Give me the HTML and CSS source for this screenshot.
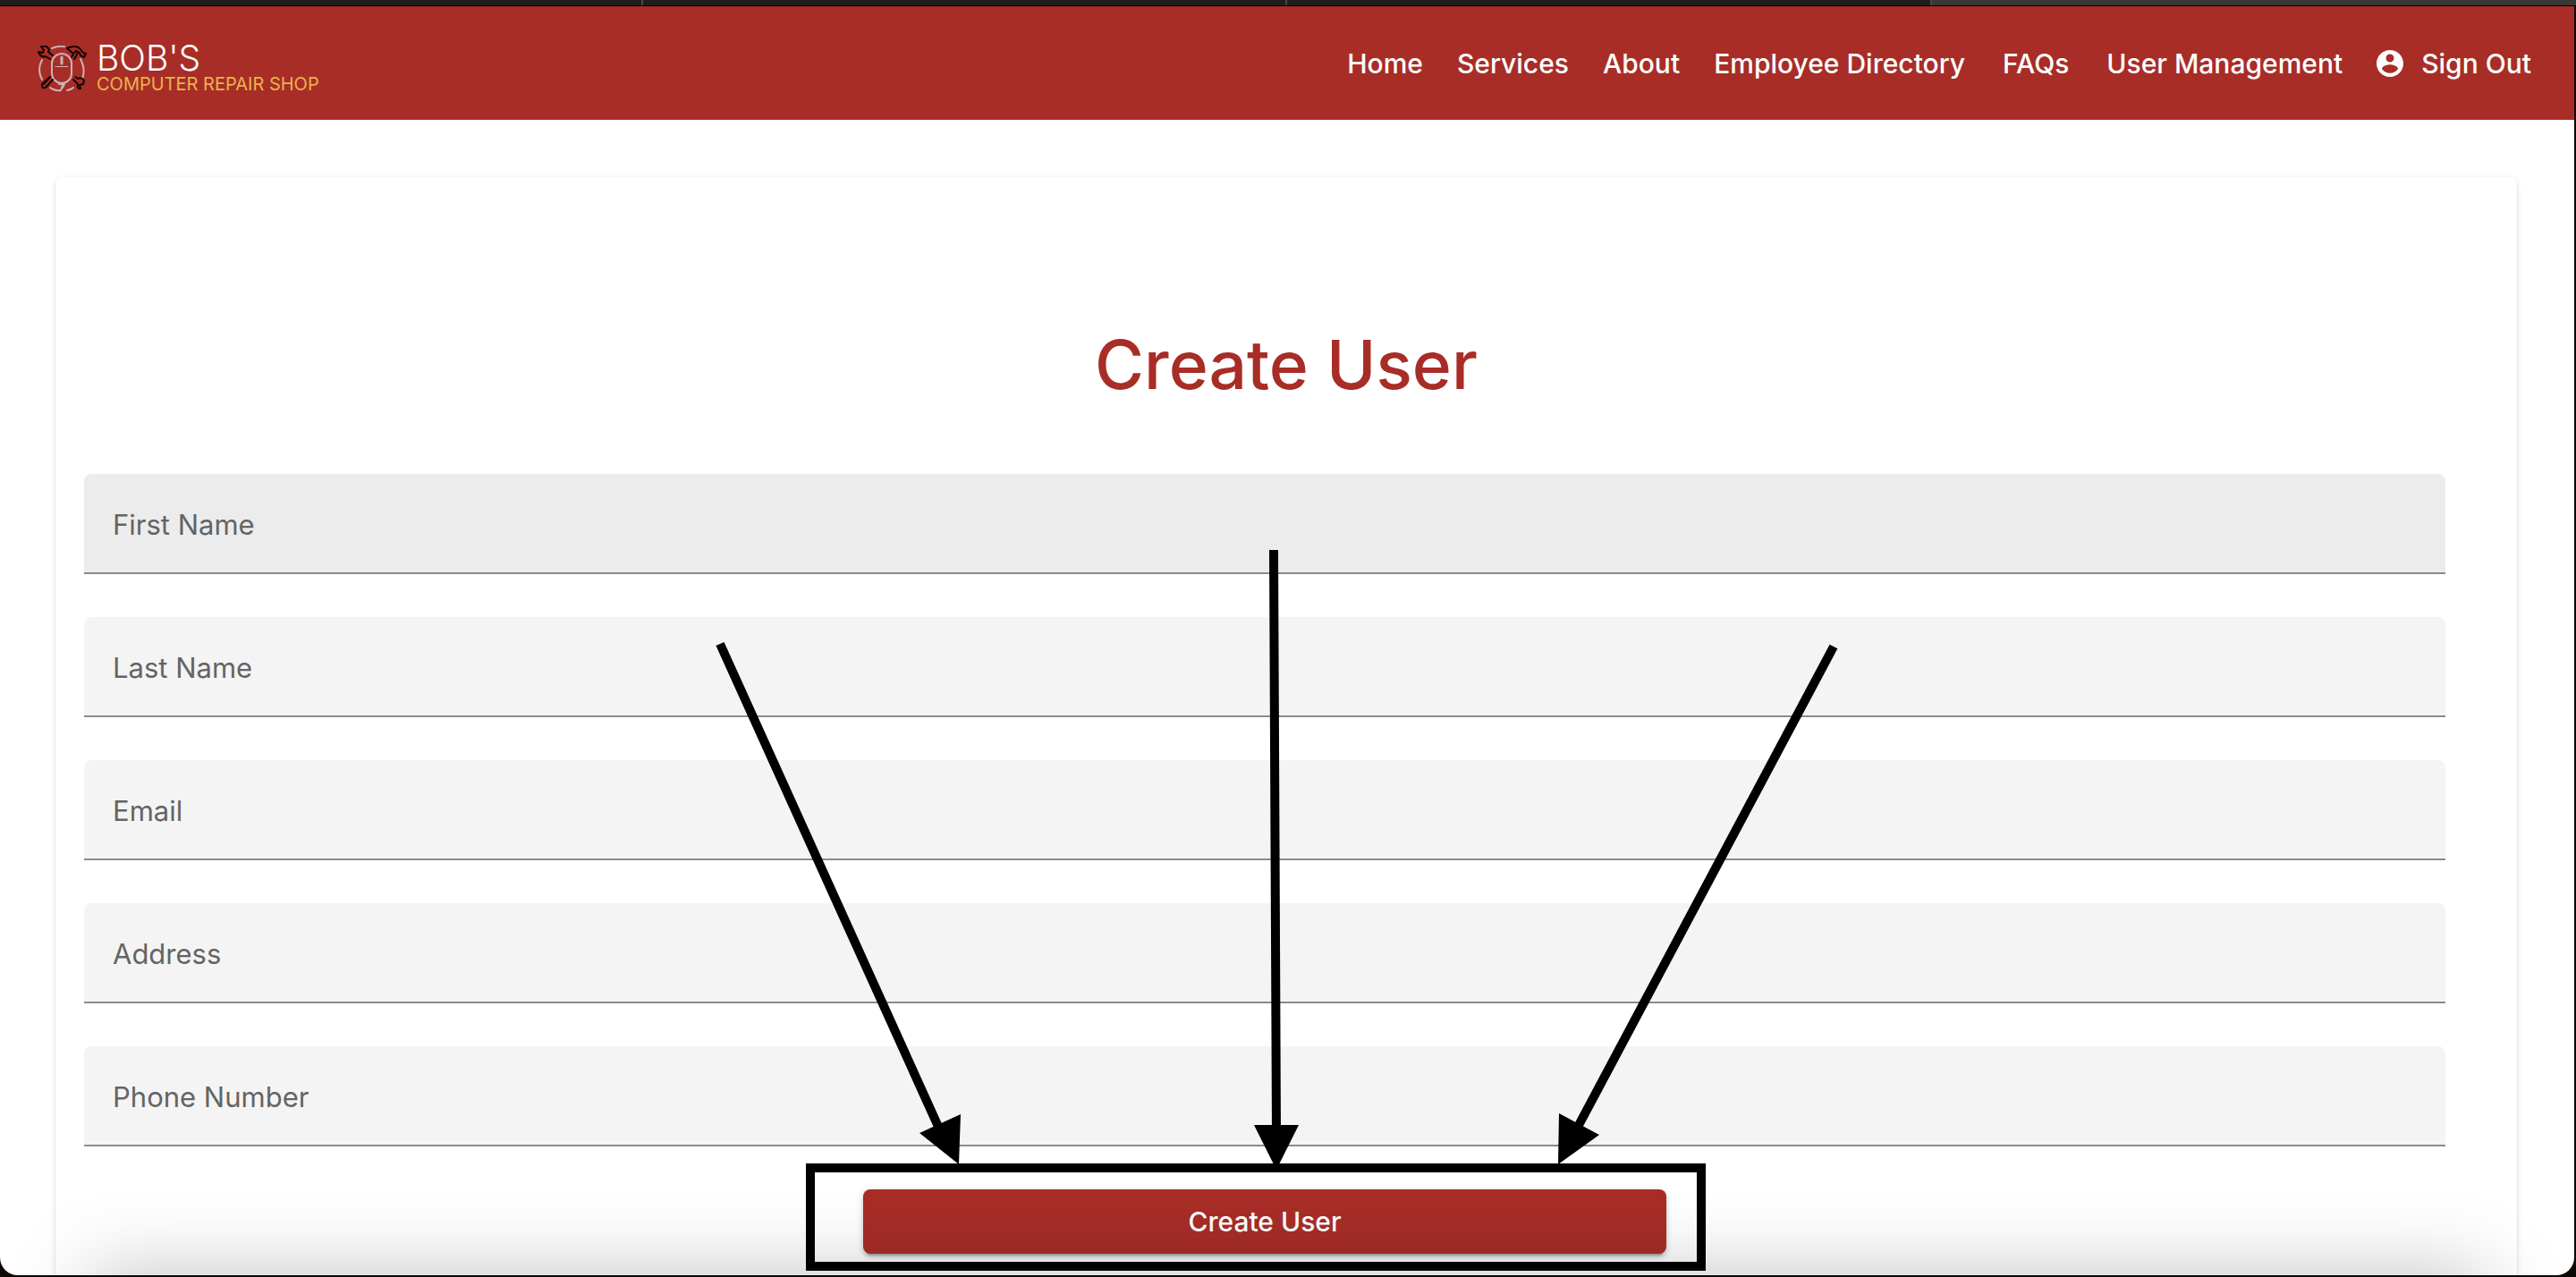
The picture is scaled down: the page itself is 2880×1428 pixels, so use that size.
FILE: index.html
```html
<!DOCTYPE html>
<html lang="en">
<head>
<meta charset="utf-8">
<title>Create User - Bob's Computer Repair Shop</title>
<link rel="stylesheet" href="styles.css">
</head>
<body>
<div class="tabstrip"><span></span><span></span><span></span><span class="active"></span></div>
<div class="window">
  <header class="toolbar">
    <a class="brand" href="#">
      <svg class="brand-mark" viewBox="0 0 56 52" fill="none" stroke-linecap="round" stroke-linejoin="round" aria-hidden="true">
        <g stroke="#c9b3b3" stroke-width="2">
          <path d="M16 3Q23 0 30 1M5 16Q-1 27 5 38M48 15Q54 27 50 37M14 47Q19 51 26 50L28 44M33 50Q38 49 40 47"/>
          <rect x="16" y="9" width="22" height="33" rx="11"/>
          <path d="M27 13v7" stroke-width="3"/>
          <path d="M20 23.500h14" stroke-width="1"/>
          <path d="M24 43h6l-2 4"/>
        </g>
        <g stroke="#150504" stroke-width="2">
          <path d="M4 1Q11-1 13 5L12 7L17 11M1 7Q4 14 9 12L14 15M4 1L7 5L6 8L1 7"/>
          <path d="M33 3Q42-1 47 3L51 8L54 9L52 13L48 11L47 8L43 6L40 9L33 3M40 9L38 13M45 8L41 15"/>
          <path d="M14 35L5 43Q4 48 9 47L17 38M14 35L7 43"/>
          <path d="M40 38L45 43Q44 49 48 48L47 44L51 43L52 39Q49 35 45 37L42 35"/>
        </g>
      </svg>
      <span class="brand-text"><span class="brand-name">BOB'S</span><span class="brand-sub">COMPUTER REPAIR SHOP</span></span>
    </a>
    <nav class="nav">
      <a href="#">Home</a>
      <a href="#">Services</a>
      <a href="#">About</a>
      <a class="directory" href="#">Employee Directory</a>
      <a class="faqs" href="#">FAQs</a>
      <a href="#">User Management</a>
      <button type="button" class="sign-out">
        <svg viewBox="2 2 20 20" aria-hidden="true"><path fill="currentColor" d="M12 2C6.480 2 2 6.480 2 12s4.480 10 10 10 10-4.480 10-10S17.520 2 12 2zm0 3c1.660 0 3 1.340 3 3s-1.340 3-3 3-3-1.340-3-3 1.340-3 3-3zm0 14.200c-2.500 0-4.710-1.280-6-3.220.030-1.990 4-3.080 6-3.080 1.990 0 5.970 1.090 6 3.080-1.290 1.940-3.500 3.220-6 3.220z"/></svg>
        Sign Out
      </button>
    </nav>
  </header>
  <main class="page">
    <form class="card">
      <h1>Create User</h1>
      <label class="field hovered"><span>First Name</span><input type="text" name="firstName"></label>
      <label class="field"><span>Last Name</span><input type="text" name="lastName"></label>
      <label class="field"><span>Email</span><input type="email" name="email"></label>
      <label class="field"><span>Address</span><input type="text" name="address"></label>
      <label class="field"><span>Phone Number</span><input type="tel" name="phone"></label>
      <button type="submit" class="submit">Create User</button>
    </form>
  </main>
  <div class="fade"></div>
</div>
<svg class="annotations" viewBox="0 0 2880 1428" aria-hidden="true">
  <g stroke="#000" stroke-width="10" fill="none">
    <path d="M805 720L1050 1262M1424 615L1427 1265M2050 723L1763 1262"/>
    <rect x="906" y="1306" width="996" height="110"/>
  </g>
  <path d="M1028 1267L1074 1246L1072 1302ZM1402 1258L1452 1258L1427 1308ZM1743 1245L1788 1269L1742 1302Z"/>
</svg>
</body>
</html>
```
FILE: styles.css
```css
* { box-sizing: border-box; }

html { height: 100%; background: #000; }

body {
  margin: 0;
  height: 100%;
  display: flex;
  flex-direction: column;
  overflow: hidden;
  font-family: Inter, "Liberation Sans", sans-serif;
  background: #0d0904;
}

.tabstrip {
  display: grid;
  grid-template-columns: 717px 720px 721px 1fr;
  flex: none;
  height: 7px;
  background: #1e1e1e;
  border-bottom: 1px solid #000;
}
.tabstrip span + span { border-left: 2px solid #484848; }
.tabstrip .active { background: #383836; }

.window {
  position: relative;
  flex: 1;
  min-height: 0;
  margin: 0 2px 2px 0;
  overflow: hidden;
  background: #fff;
  border-radius: 0 0 20px 20px;
}

.toolbar {
  display: flex;
  justify-content: space-between;
  align-items: center;
  height: 127px;
  padding: 0 48px 0 42px;
  background: #a82d27;
}

.brand { display: flex; align-items: center; gap: 10px; margin-top: 12px; text-decoration: none; }
.brand-mark { width: 56px; height: 52px; }
.brand-text { display: flex; flex-direction: column; }
.brand-name { font-size: 39px; line-height: 34px; font-weight: 300; color: #fff; }
.brand-sub { font-size: 20px; line-height: 24px; color: #e9b44c; }

.nav { display: flex; align-items: center; gap: 38px; }
.nav a,
.sign-out {
  color: #fff;
  font: 500 30px/40px Inter, "Liberation Sans", sans-serif;
  text-decoration: none;
  white-space: nowrap;
}
.nav .directory,
.nav .faqs { margin-right: 4px; }
.sign-out {
  display: flex;
  align-items: center;
  gap: 20px;
  padding: 0;
  border: 0;
  background: none;
}
.sign-out svg { width: 30px; height: 30px; }

.page { padding: 64px 64px 0 62px; }

.card {
  display: flex;
  flex-direction: column;
  padding: 160px 80px 80px 32px;
  border-radius: 8px;
  background: #fff;
  box-shadow: 0 4px 2px -2px rgba(0, 0, 0, .2), 0 2px 2px rgba(0, 0, 0, .14), 0 2px 6px rgba(0, 0, 0, .12);
}

h1 {
  margin: 0 -48px 72px 0;
  font-size: 75px;
  line-height: 100px;
  font-weight: 500;
  text-align: center;
  color: #a82d27;
}

.field {
  display: flex;
  align-items: center;
  height: 112px;
  margin-bottom: 48px;
  padding: 4px 32px 0;
  border-radius: 8px 8px 0 0;
  border-bottom: 2px solid #8b8b8b;
  background: #f4f4f4;
  font-size: 31px;
  line-height: 40px;
  color: #646464;
}
.hovered { background: #ececec; }
.field input {
  flex: 1;
  min-width: 0;
  border: 0;
  outline: 0;
  background: none;
  font: inherit;
}

.submit {
  align-self: center;
  width: 34%;
  height: 72px;
  border: 0;
  border-radius: 8px;
  background: #a82d27;
  color: #fff;
  font: 500 30px/40px Inter, "Liberation Sans", sans-serif;
  box-shadow: 0 6px 2px -4px rgba(0, 0, 0, .2), 0 4px 4px rgba(0, 0, 0, .14), 0 2px 10px rgba(0, 0, 0, .12);
}

.fade {
  position: absolute;
  inset: auto 100px -200px;
  height: 200px;
  box-shadow: 0 0 90px rgba(0, 0, 0, .25);
  pointer-events: none;
}

.annotations {
  position: absolute;
  inset: 0;
  width: 100%;
  height: 100%;
  pointer-events: none;
}
```
